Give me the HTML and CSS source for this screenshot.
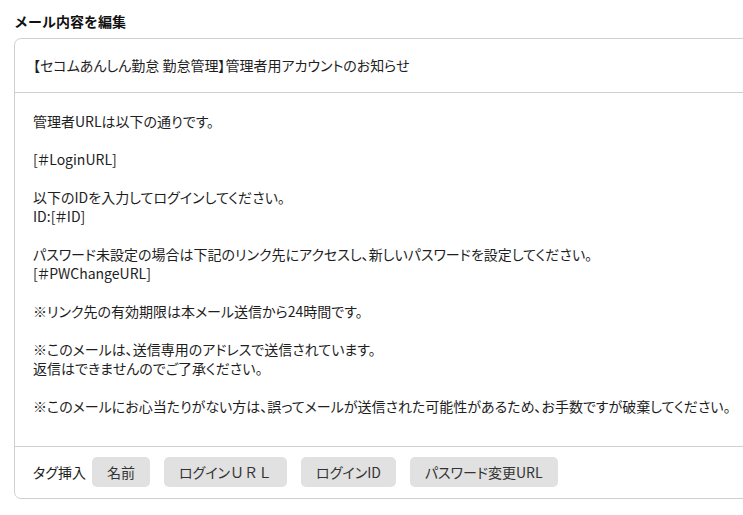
FILE: index.html
```html
<!DOCTYPE html>
<html lang="ja">
<head>
<meta charset="utf-8">
<link rel="stylesheet" href="styles.css">
</head>
<body>
<div class="page">
  <h2 class="title">メール内容を編集</h2>
  <div class="card">
    <div class="subject">【セコムあんしん勤怠 勤怠管理】管理者用アカウントのお知らせ</div>
    <div class="body">
      <p>管理者URLは以下の通りです。</p>
      <p class="blank">&nbsp;</p>
      <p>[＃LoginURL]</p>
      <p class="blank">&nbsp;</p>
      <p>以下のIDを入力してログインしてください。</p>
      <p>ID:[＃ID]</p>
      <p class="blank">&nbsp;</p>
      <p>パスワード未設定の場合は下記のリンク先にアクセスし、新しいパスワードを設定してください。</p>
      <p>[＃PWChangeURL]</p>
      <p class="blank">&nbsp;</p>
      <p>※リンク先の有効期限は本メール送信から24時間です。</p>
      <p class="blank">&nbsp;</p>
      <p>※このメールは、送信専用のアドレスで送信されています。</p>
      <p>返信はできませんのでご了承ください。</p>
      <p class="blank">&nbsp;</p>
      <p>※このメールにお心当たりがない方は、誤ってメールが送信された可能性があるため、お手数ですが破棄してください。</p>
    </div>
    <div class="tags">
      <span class="tags-label">タグ挿入</span>
      <button class="tag">名前</button>
      <button class="tag">ログイン<span class="fw">ＵＲＬ</span></button>
      <button class="tag">ログインID</button>
      <button class="tag">パスワード変更URL</button>
    </div>
  </div>
</div>
</body>
</html>
```

FILE: styles.css
```css
html, body {
  margin: 0;
  padding: 0;
  background: #fff;
  overflow: hidden;
}
body {
  font-family: "Noto Sans CJK JP", "Noto Sans", sans-serif;
  font-size: 14px;
  color: #1e1e1e;
}
.page {
  padding: 12px 0 0 14px;
}
.title {
  margin: 0 0 7px 0;
  font-size: 14px;
  font-weight: bold;
  line-height: 19px;
  color: #111;
}
.card {
  width: 760px;
  border: 1px solid #cfcfcf;
  border-radius: 7px;
  box-sizing: border-box;
}
.subject {
  padding: 0 18px;
  height: 53px;
  display: flex;
  align-items: center;
  line-height: 19px;
  border-bottom: 1px solid #cfcfcf;
  font-feature-settings: "palt";
}
.body {
  padding: 19px 18px 30px;
  border-bottom: 1px solid #cfcfcf;
  line-height: 19px;
  font-feature-settings: "palt";
}
.body p {
  margin: 0;
}
.tags {
  display: flex;
  align-items: center;
  padding: 10px 18px 11px;
  gap: 14px;
  font-feature-settings: "palt";
}
.tags-label {
  margin-right: -8px;
}
.tag {
  font-family: inherit;
  font-size: 14px;
  color: #333;
  background: #e1e1e1;
  border: none;
  border-radius: 5px;
  height: 30px;
  padding: 0 15px;
  font-feature-settings: "palt";
}
.fw {
  font-feature-settings: normal;
}
```
